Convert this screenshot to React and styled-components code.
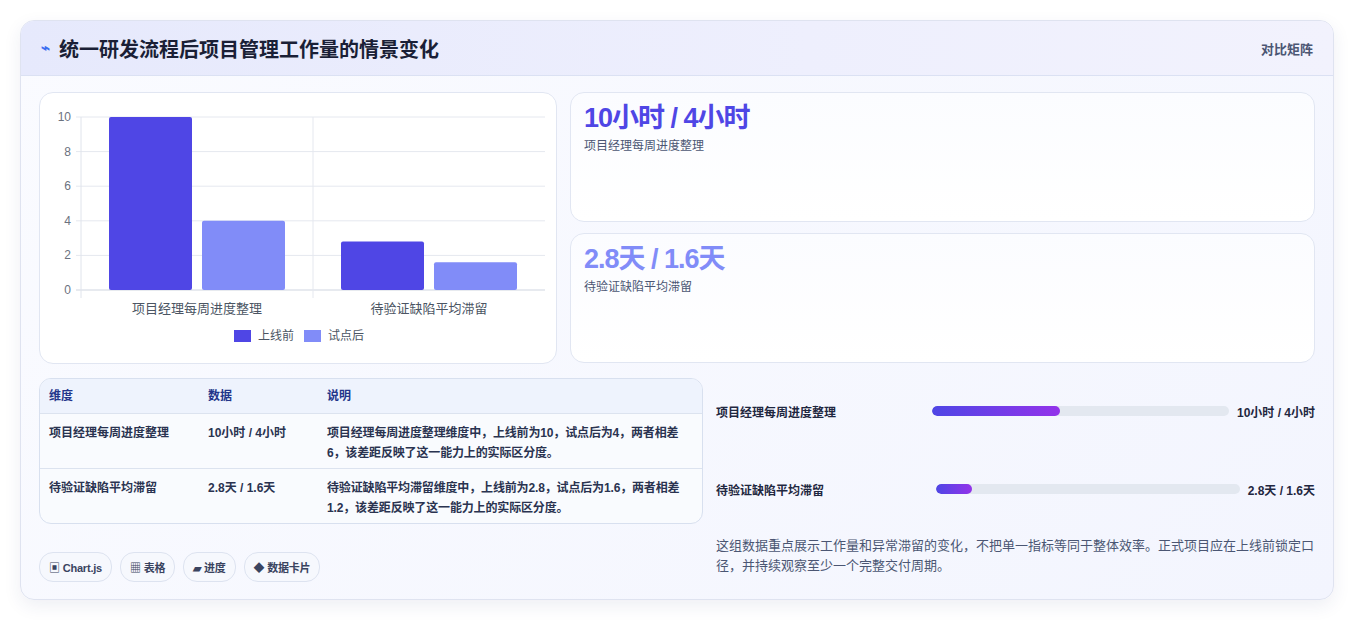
import React from "react";
import styled, { createGlobalStyle } from "styled-components";

const G = createGlobalStyle`
  body{margin:0;background:#fff;font-family:"Liberation Sans","Noto Sans CJK SC",sans-serif;}
`;
const Page = styled.div`padding:20px 20px 20px 20px;width:1354px;box-sizing:border-box;`;
const Card = styled.div`
  width:1314px;height:580px;box-sizing:border-box;border:1px solid #dfe3f0;border-radius:14px;
  background:linear-gradient(135deg,#fafbff,#f3f5fe);box-shadow:0 6px 18px rgba(40,50,120,.08);overflow:hidden;
  display:flex;flex-direction:column;
`;
const Header = styled.div`
  height:55px;box-sizing:border-box;display:flex;align-items:center;justify-content:space-between;
  padding:0 20px;background:linear-gradient(90deg,#e6e9fc,#eeeffd 60%,#f2f2fd);border-bottom:1px solid #dbe1f3;
`;
const Title = styled.h1`margin:0;font-size:20px;font-weight:700;color:#1a1f36;display:flex;align-items:center;gap:9px;`;
const Bolt = styled.span`color:#3b6ef0;font-size:15px;`;
const Tag = styled.span`font-size:13px;color:#4b5673;font-weight:600;`;
const Body = styled.div`padding:16px 18px 0 18px;display:flex;flex-direction:column;gap:14px;`;
const Row = styled.div`display:flex;gap:13px;`;
const Panel = styled.div`
  background:#fff;border:1px solid #e1e6f2;border-radius:14px;box-sizing:border-box;
`;
const ChartPanel = styled(Panel)`width:518px;height:272px;`;
const Stats = styled.div`flex:1;display:flex;flex-direction:column;gap:11px;`;
const Stat = styled(Panel)`height:130px;padding:10px 13px;background:linear-gradient(180deg,#fbfcff,#fff);`;
const StatVal = styled.div`font-size:27px;font-weight:700;color:${p=>p.c};letter-spacing:-1px;line-height:30px;`;
const StatLbl = styled.div`font-size:12px;color:#4b5673;margin-top:3px;`;
const Left = styled.div`width:664px;display:flex;flex-direction:column;gap:28px;`;
const Table = styled.div`border:1px solid #d8e0ef;border-radius:12px;overflow:hidden;background:#f9fbfe;`;
const TR = styled.div`display:grid;grid-template-columns:159px 119px 1fr;padding:0 9px;min-height:${p=>p.h}px;
  align-items:${p=>p.head?"center":"start"};border-top:${p=>p.first?"none":"1px solid #dce3ef"};
  background:${p=>p.head?"#eef3fd":"transparent"};font-size:12px;font-weight:700;
  color:${p=>p.head?"#23358a":"#2a3350"};line-height:20px;padding-top:${p=>p.head?0:9}px;box-sizing:border-box;`;
const Desc = styled.div`letter-spacing:-0.15px;`;
const Chips = styled.div`display:flex;gap:8px;`;
const Chip = styled.span`height:28px;padding:0 9px;border:1px solid #dde3f0;border-radius:14px;background:#f6f8fd;
  display:inline-flex;align-items:center;font-size:11px;font-weight:700;color:#3a4460;letter-spacing:-0.2px;`;
const Right = styled.div`flex:1;display:flex;flex-direction:column;padding-left:0;`;
const Prog = styled.div`display:flex;align-items:center;height:20px;margin-top:${p=>p.mt}px;font-size:12px;font-weight:700;color:#1f2740;`;
const PLabel = styled.div`width:${p=>p.w}px;flex:none;`;
const Track = styled.div`flex:1;height:10px;border-radius:5px;background:#e3e8f0;overflow:hidden;margin-right:8px;`;
const Fill = styled.div`height:100%;border-radius:5px;background:linear-gradient(90deg,#4f46e5,#9333ea);`;
const Note = styled.p`margin:37px 0 0;font-size:13px;line-height:20px;color:#4b5673;`;

function Chart(){
  const y=v=>289-v*17.3;
  const grid=[0,2,4,6,8,10];
  return (
    <svg width="518" height="272" viewBox="39 92 518 272" style={{display:"block"}}>
      {grid.map(g=>(
        <g key={g}>
          <line x1="75" x2="544" y1={y(g)} y2={y(g)} stroke={g===0?"#cfd5e0":"#e5e8ef"}/>
          <text x="70" y={y(g)+4} textAnchor="end" fontSize="12" fill="#6b7280" fontFamily="Liberation Sans">{g}</text>
        </g>
      ))}
      <line x1="80" x2="80" y1="116" y2="297" stroke="#e0e4ec"/>
      <line x1="312" x2="312" y1="116" y2="297" stroke="#e5e8ef"/>
      <rect x="108" y={y(10)} width="83" height={10*17.3} rx="2" fill="#4f46e5"/>
      <rect x="201" y={y(4)} width="83" height={4*17.3} rx="2" fill="#818cf8"/>
      <rect x="340" y={y(2.8)} width="83" height={2.8*17.3} rx="2" fill="#4f46e5"/>
      <rect x="433" y={y(1.6)} width="83" height={1.6*17.3} rx="2" fill="#818cf8"/>
      <text x="196" y="312" textAnchor="middle" fontSize="13" fill="#4b5563" fontFamily="Liberation Sans,Noto Sans CJK SC">项目经理每周进度整理</text>
      <text x="428" y="312" textAnchor="middle" fontSize="13" fill="#4b5563" fontFamily="Liberation Sans,Noto Sans CJK SC">待验证缺陷平均滞留</text>
      <rect x="233" y="329" width="17" height="12" fill="#4f46e5"/>
      <text x="257" y="339" fontSize="12" fill="#4b5563" fontFamily="Liberation Sans,Noto Sans CJK SC">上线前</text>
      <rect x="303" y="329" width="17" height="12" fill="#818cf8"/>
      <text x="327" y="339" fontSize="12" fill="#4b5563" fontFamily="Liberation Sans,Noto Sans CJK SC">试点后</text>
    </svg>
  );
}

export default function App(){
  return (<Page><G/>
    <Card>
      <Header><Title><Bolt>⌁</Bolt>统一研发流程后项目管理工作量的情景变化</Title><Tag>对比矩阵</Tag></Header>
      <Body>
        <Row>
          <ChartPanel><Chart/></ChartPanel>
          <Stats>
            <Stat><StatVal c="#4f46e5">10小时 / 4小时</StatVal><StatLbl>项目经理每周进度整理</StatLbl></Stat>
            <Stat><StatVal c="#818cf8">2.8天 / 1.6天</StatVal><StatLbl>待验证缺陷平均滞留</StatLbl></Stat>
          </Stats>
        </Row>
        <Row>
          <Left>
            <Table>
              <TR head first h={34}><div>维度</div><div>数据</div><div>说明</div></TR>
              <TR h={55}><div>项目经理每周进度整理</div><div>10小时 / 4小时</div><Desc>项目经理每周进度整理维度中，上线前为10，试点后为4，两者相差6，该差距反映了这一能力上的实际区分度。</Desc></TR>
              <TR h={55}><div>待验证缺陷平均滞留</div><div>2.8天 / 1.6天</div><Desc>待验证缺陷平均滞留维度中，上线前为2.8，试点后为1.6，两者相差1.2，该差距反映了这一能力上的实际区分度。</Desc></TR>
            </Table>
            <Chips><Chip>▣ Chart.js</Chip><Chip>▦ 表格</Chip><Chip>▰ 进度</Chip><Chip>◆ 数据卡片</Chip></Chips>
          </Left>
          <Right>
            <Prog mt={23}><PLabel w={216}>项目经理每周进度整理</PLabel><Track><Fill style={{width:"43%"}}/></Track>10小时 / 4小时</Prog>
            <Prog mt={58}><PLabel w={220}>待验证缺陷平均滞留</PLabel><Track><Fill style={{width:"12%"}}/></Track>2.8天 / 1.6天</Prog>
            <Note>这组数据重点展示工作量和异常滞留的变化，不把单一指标等同于整体效率。正式项目应在上线前锁定口径，并持续观察至少一个完整交付周期。</Note>
          </Right>
        </Row>
      </Body>
    </Card>
  </Page>);
}
